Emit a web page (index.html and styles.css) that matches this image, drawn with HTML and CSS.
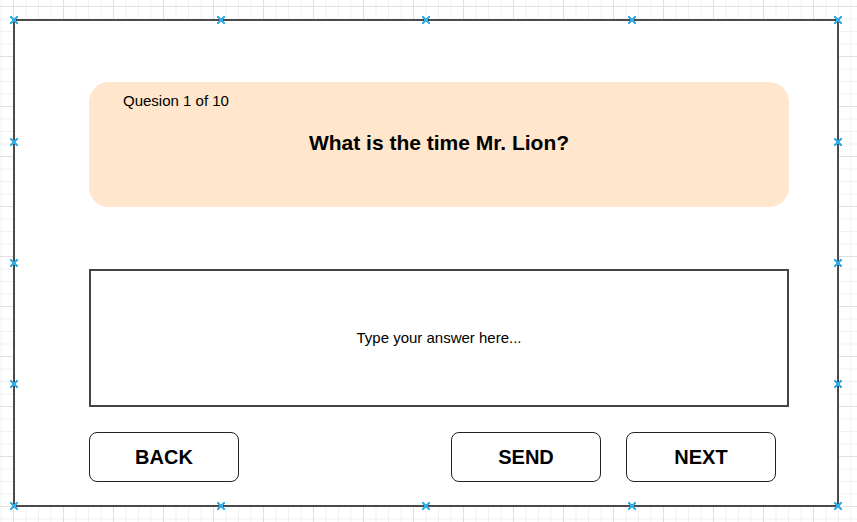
FILE: index.html
```html
<!DOCTYPE html>
<html>
<head>
<meta charset="utf-8">
<link rel="stylesheet" href="styles.css">
</head>
<body>
<div class="canvas">
  <div class="frame">
    <section class="question-card">
      <div class="question-count">Quesion 1 of 10</div>
      <h1 class="question-title">What is the time Mr. Lion?</h1>
    </section>
    <div class="answer-box">Type your answer here...</div>
    <div class="actions">
      <button class="btn">BACK</button>
      <div class="actions-right">
        <button class="btn">SEND</button>
        <button class="btn">NEXT</button>
      </div>
    </div>

    <span class="handle h-t0"></span><span class="handle h-t1"></span><span class="handle h-t2"></span><span class="handle h-t3"></span><span class="handle h-t4"></span>
    <span class="handle h-b0"></span><span class="handle h-b1"></span><span class="handle h-b2"></span><span class="handle h-b3"></span><span class="handle h-b4"></span>
    <span class="handle h-l1"></span><span class="handle h-l2"></span><span class="handle h-l3"></span>
    <span class="handle h-r1"></span><span class="handle h-r2"></span><span class="handle h-r3"></span>
  </div>
</div>
</body>
</html>
```

FILE: styles.css
```css
html, body {
  margin: 0;
  padding: 0;
}
body {
  width: 857px;
  height: 522px;
  overflow: hidden;
  font-family: "Liberation Sans", Arial, sans-serif;
  color: #000;
  background-color: #fff;
  background-image:
    linear-gradient(to right, #e0e0e0 1px, transparent 1px),
    linear-gradient(to bottom, #e0e0e0 1px, transparent 1px),
    linear-gradient(to right, #f0f0f0 1px, transparent 1px),
    linear-gradient(to bottom, #f0f0f0 1px, transparent 1px);
  background-size: 50px 50px, 50px 50px, 12.5px 12.5px, 12.5px 12.5px;
  background-position: 13px 6px, 13px 6px, 13px 6px, 13px 6px;
}
.canvas {
  padding: 19px 0 0 13px;
}
.frame {
  position: relative;
  box-sizing: border-box;
  width: 826px;
  height: 488px;
  border: 2px solid #4a4a4a;
  background: #fff;
  padding: 61px 0 0 74px;
  display: flex;
  flex-direction: column;
}
.question-card {
  box-sizing: border-box;
  width: 700px;
  height: 125px;
  background: #ffe6cc;
  border-radius: 20px;
  padding: 10px 0 0 34px;
  position: relative;
}
.question-count {
  font-size: 15px;
  line-height: 17px;
}
.question-title {
  margin: 0;
  position: absolute;
  left: 0;
  right: 0;
  top: 49px;
  text-align: center;
  font-size: 21px;
  line-height: 24px;
  font-weight: bold;
}
.answer-box {
  box-sizing: border-box;
  margin-top: 62px;
  width: 700px;
  height: 138px;
  border: 2px solid #444;
  padding-bottom: 2px;
  display: flex;
  align-items: center;
  justify-content: center;
  font-size: 15px;
}
.actions {
  margin-top: 25px;
  width: 687px;
  display: flex;
  justify-content: space-between;
}
.actions-right {
  display: flex;
  gap: 25px;
}
.btn {
  box-sizing: border-box;
  width: 150px;
  height: 50px;
  border: 1px solid #222;
  border-radius: 8px;
  background: #fff;
  font-family: "Liberation Sans", Arial, sans-serif;
  font-weight: bold;
  font-size: 20px;
  color: #000;
  padding: 0;
}
.handle {
  position: absolute;
  width: 8px;
  height: 8px;
  transform: translate(-50%, -50%);
  background:
    linear-gradient(45deg, transparent 38%, #35aee8 38%, #35aee8 62%, transparent 62%),
    linear-gradient(-45deg, transparent 38%, #35aee8 38%, #35aee8 62%, transparent 62%);
}
.h-t0, .h-t1, .h-t2, .h-t3, .h-t4 { top: -1px; }
.h-b0, .h-b1, .h-b2, .h-b3, .h-b4 { top: calc(100% + 1px); }
.h-t0, .h-b0 { left: -1px; }
.h-t1, .h-b1 { left: 25%; }
.h-t2, .h-b2 { left: 50%; }
.h-t3, .h-b3 { left: 75%; }
.h-t4, .h-b4 { left: calc(100% + 1px); }
.h-l1, .h-l2, .h-l3 { left: -1px; }
.h-r1, .h-r2, .h-r3 { left: calc(100% + 1px); }
.h-l1, .h-r1 { top: 25%; }
.h-l2, .h-r2 { top: 50%; }
.h-l3, .h-r3 { top: 75%; }
```
